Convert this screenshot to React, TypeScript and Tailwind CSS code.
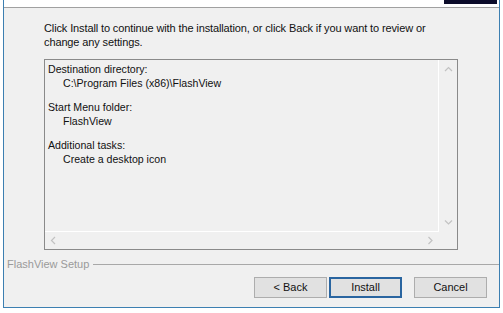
import React from 'react'

const Chevron = ({ dir }: { dir: 'up' | 'down' | 'left' | 'right' }) => {
  const d = {
    up: 'M1 5 L4.5 1.5 L8 5',
    down: 'M1 1.5 L4.5 5 L8 1.5',
    left: 'M5 1 L1.5 4.5 L5 8',
    right: 'M1.5 1 L5 4.5 L1.5 8',
  }[dir]
  const vertical = dir === 'up' || dir === 'down'
  return (
    <svg width={vertical ? 9 : 7} height={vertical ? 7 : 9} viewBox={vertical ? '0 0 9 7' : '0 0 7 9'}>
      <path d={d} fill="none" stroke="#c2c2c2" strokeWidth="1.2" />
    </svg>
  )
}

const App = () => {
  return (
    <div className="w-[503px] h-[313px] bg-white px-[3px] pb-[5px] flex flex-col font-['Liberation_Sans',Arial,sans-serif] text-[11px] text-[#111]">
      <div className="flex-1 flex flex-col border-x border-b border-[#3c7fb1]">
        {/* header strip */}
        <div className="h-[8px] shrink-0 bg-white border-b border-[#a0a0a0] flex justify-end pr-[2px]">
          <div className="w-[53px] h-[4px] bg-[#0c0c2a]" />
        </div>

        <div className="flex-1 bg-[#f0f0f0] flex flex-col">
          <div className="pl-[40px] pt-[13px]">
            <p className="leading-[14px] whitespace-nowrap tracking-[-0.12px]">
              Click Install to continue with the installation, or click Back if you want to review or
              <br />
              change any settings.
            </p>

            <div className="mt-[10px] w-[414px] h-[191px] border border-[#8a8a8a] grid grid-cols-[1fr_18px] grid-rows-[1fr_17px]">
              <div className="border-r border-b border-white pl-[3px] pt-[2px] leading-[14px] text-[10.6px] whitespace-nowrap">
                <div>Destination directory:</div>
                <div className="pl-[15px]">C:\Program Files (x86)\FlashView</div>
                <div className="mt-[10px]">Start Menu folder:</div>
                <div className="pl-[15px]">FlashView</div>
                <div className="mt-[10px]">Additional tasks:</div>
                <div className="pl-[15px]">Create a desktop icon</div>
              </div>
              <div className="flex flex-col items-center justify-between py-[6px]">
                <Chevron dir="up" />
                <Chevron dir="down" />
              </div>
              <div className="flex items-center justify-between px-[5px]">
                <Chevron dir="left" />
                <Chevron dir="right" />
              </div>
              <div />
            </div>
          </div>

          <div className="mt-[7px] flex items-center pl-[3px]">
            <span className="text-[#9a9a9a] leading-[14px]">FlashView Setup</span>
            <div className="flex-1 ml-[4px] h-px bg-[#a8a8a8]" />
          </div>

          <div className="mt-[6px] flex justify-end pr-[12px]">
            <button className="w-[73px] h-[21px] border border-[#adadad] bg-[#e1e1e1] leading-none">&lt; Back</button>
            <button className="ml-[2px] w-[73px] h-[21px] border-2 border-[#2a65a0] bg-[#e1e1e1] leading-none">Install</button>
            <button className="ml-[12px] w-[73px] h-[21px] border border-[#adadad] bg-[#e1e1e1] leading-none">Cancel</button>
          </div>
        </div>
      </div>
    </div>
  )
}

export default App
